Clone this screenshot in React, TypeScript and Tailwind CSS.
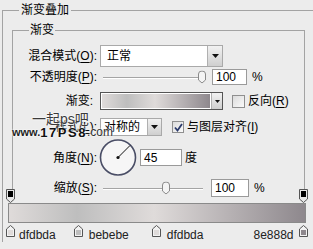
import React from "react";

const Thumb = () => (
  <svg width="8" height="13" viewBox="0 0 8 13" className="block">
    <path d="M0.5 3.5 Q0.5 0.5 4 0.5 Q7.5 0.5 7.5 3.5 L7.5 9.5 L4 12.5 L0.5 9.5 Z" fill="#f4f4f4" stroke="#8a8a8a" strokeWidth="1" />
  </svg>
);

const Slider = ({ pos }: { pos: number }) => (
  <div className="relative w-[107px] h-full">
    <div className="absolute left-[3px] top-1/2 w-[100px] h-[2px] border-t border-[#a4a4a4] border-b border-b-white" />
    <div className="absolute top-1/2 -translate-y-1/2" style={{ left: pos }}>
      <Thumb />
    </div>
  </div>
);

const Arrow = ({ w, big }: { w: number; big?: boolean }) => (
  <div
    className="h-full flex items-center justify-center bg-gradient-to-b from-[#f2f2f2] to-[#cfcfcf] border-l border-[#b0b0b0]"
    style={{ width: w }}
  >
    <svg width={big ? 7 : 5} height={big ? 4 : 3} viewBox="0 0 7 4">
      <path d="M0 0 L7 0 L3.5 4 Z" fill="#111" />
    </svg>
  </div>
);

const TopStop = () => (
  <svg width="9" height="14" viewBox="0 0 9 14" className="block">
    <path d="M0.5 0.5 H8.5 V10 L4.5 13.5 L0.5 10 Z" fill="#e8e8e8" stroke="#555" />
    <rect x="2" y="2" width="5" height="6" fill="#000" />
  </svg>
);

const BotStop = ({ color }: { color: string }) => (
  <svg width="9" height="12" viewBox="0 0 9 12" className="block">
    <path d="M4.5 0.5 L8.5 4 V11.5 H0.5 V4 Z" fill="#f2f2f2" stroke="#555" />
    <rect x="2" y="5" width="5" height="5" fill={color} />
  </svg>
);

const U = ({ c }: { c: string }) => <span className="underline underline-offset-2">{c}</span>;

export default function App() {
  const grad = "linear-gradient(to right, #dfdbda 0%, #bebebe 23%, #dfdbda 49%, #8e888d 100%)";
  return (
    <div className="w-[313px] h-[249px] bg-[#ececec] overflow-hidden relative text-[12px] leading-[14px] text-black font-['Liberation_Sans','Noto_Sans_CJK_SC',sans-serif]">
      <div className="relative ml-[2px] mt-[10px] w-[330px] border-t border-l border-[#a3a3a3]">
        <span className="absolute -top-[8px] left-[16px] px-[2px] bg-[#ececec]">渐变叠加</span>
        <div className="relative ml-[9px] mt-[19px] w-[293px] pb-[2px] border-t border-l border-r border-[#a3a3a3]">
          <span className="absolute -top-[8px] left-[16px] px-[1px] bg-[#ececec]">渐变</span>

          {/* row 1 */}
          <div className="flex items-center mt-[14px] h-[22px]">
            <div className="w-[84px] text-right">混合模式(<U c="O" />):</div>
            <div className="ml-[3px] flex w-[123px] h-full bg-white border border-[#a9a9a9]">
              <div className="flex-1 flex items-center pl-[6px]">正常</div>
              <Arrow w={15} big />
            </div>
          </div>

          {/* row 2 */}
          <div className="flex items-center mt-[1px] h-[17px]">
            <div className="w-[84px] text-right">不透明度(<U c="P" />):</div>
            <div className="ml-[3px] h-full">
              <Slider pos={98} />
            </div>
            <div className="ml-[5px] w-[35px] h-[16px] bg-white border border-[#9a9a9a] flex items-center pl-[3px]">100</div>
            <div className="ml-[5px]">%</div>
          </div>

          {/* row 3 */}
          <div className="flex items-center mt-[7px] h-[18px]">
            <div className="w-[80px] text-right">渐变:</div>
            <div className="ml-[7px] flex w-[123px] h-full border border-[#555]">
              <div className="flex-1 h-full border border-white" style={{ background: grad }} />
              <Arrow w={11} />
            </div>
            <div className="ml-[9px] w-[13px] h-[13px] border border-[#8f8f8f] bg-gradient-to-br from-[#dcdcdc] to-[#fafafa]" />
            <div className="ml-[3px]">反向(<U c="R" />)</div>
          </div>

          {/* row 4 */}
          <div className="flex items-center mt-[8px] h-[18px]">
            <div className="w-[84px] text-right">样式(<U c="L" />):</div>
            <div className="ml-[3px] flex w-[62px] h-full bg-white border border-[#a9a9a9]">
              <div className="flex-1 flex items-center pl-[3px]">对称的</div>
              <Arrow w={14} big />
            </div>
            <div className="ml-[10px] w-[12px] h-[12px] border border-[#8f8f8f] bg-gradient-to-br from-[#dcdcdc] to-[#fafafa] flex items-center justify-center">
              <svg width="9" height="9" viewBox="0 0 9 9">
                <path d="M1 4.5 L3.5 7.5 L8 1" fill="none" stroke="#2b3a6b" strokeWidth="1.8" />
              </svg>
            </div>
            <div className="ml-[3px]">与图层对齐(<U c="I" />)</div>
          </div>

          {/* row 5 */}
          <div className="flex items-center mt-[3px] h-[37px]">
            <div className="w-[84px] text-right">角度(<U c="N" />):</div>
            <svg width="38" height="37" viewBox="0 0 38 37" className="ml-[2px]">
              <circle cx="19" cy="18.5" r="17.5" fill="#f6f6f6" stroke="#4a4e66" strokeWidth="1.6" />
              <line x1="19" y1="18.5" x2="31" y2="6.5" stroke="#111" strokeWidth="1" />
              <circle cx="19" cy="18.5" r="1.6" fill="#111" />
            </svg>
            <div className="ml-[3px] w-[42px] h-[17px] bg-white border border-[#9a9a9a] flex items-center pl-[3px]">45</div>
            <div className="ml-[3px]">度</div>
          </div>

          {/* row 6 */}
          <div className="flex items-center mt-[3px] h-[18px]">
            <div className="w-[84px] text-right">缩放(<U c="S" />):</div>
            <div className="ml-[3px] h-full">
              <Slider pos={62} />
            </div>
            <div className="ml-[4px] w-[38px] h-[18px] bg-white border border-[#9a9a9a] flex items-center pl-[3px]">100</div>
            <div className="ml-[5px]">%</div>
          </div>
        </div>

        {/* gradient strip */}
        <div className="relative ml-[5px] mt-[4px] w-[298px] h-[20px] border border-[#8a8a8a]" style={{ background: grad }}>
          <div className="absolute left-[-3px] -top-[15px]"><TopStop /></div>
          <div className="absolute left-[290px] -top-[15px]"><TopStop /></div>
          <div className="absolute left-[-3px] top-[21px]"><BotStop color="#dfdbda" /></div>
          <div className="absolute left-[65px] top-[21px]"><BotStop color="#bebebe" /></div>
          <div className="absolute left-[143px] top-[21px]"><BotStop color="#dfdbda" /></div>
          <div className="absolute left-[290px] top-[21px]"><BotStop color="#8e888d" /></div>
        </div>
        <div className="flex mt-[5px] text-[#222] text-[12px]">
          <span className="ml-[16px]">dfdbda</span>
          <span className="ml-[33px]">bebebe</span>
          <span className="ml-[38px]">dfdbda</span>
          <span className="ml-[50px]">8e888d</span>
        </div>
      </div>

      {/* watermark */}
      <div className="absolute left-[12px] top-[111px] pointer-events-none">
        <div className="ml-[20px] text-[14px] leading-[16px] text-[#3a3a3a] [text-shadow:0_0_2px_#fff,0_0_2px_#fff]">一起ps吧</div>
        <div className="flex items-end leading-[11px] [text-shadow:0_0_2px_#fff,0_0_2px_#fff]">
          <span className="text-[11px] font-bold text-[#222] tracking-[0px]">www.</span>
          <span className="text-[13px] font-black text-[#111] tracking-[1.5px]">17PS8</span>
          <span className="text-[12px] text-[#333]">.com</span>
        </div>
      </div>
    </div>
  );
}
